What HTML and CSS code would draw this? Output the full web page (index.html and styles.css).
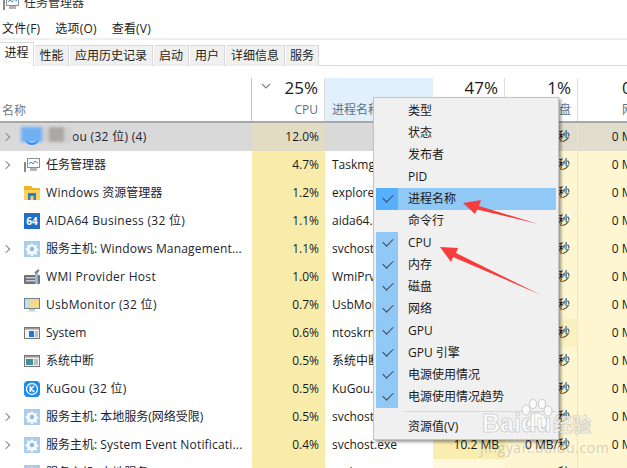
FILE: index.html
```html
<!DOCTYPE html>
<html lang="zh">
<head>
<meta charset="utf-8">
<title>任务管理器</title>
<link rel="stylesheet" href="styles.css">
</head>
<body>
<svg class="defs" width="0" height="0" aria-hidden="true">
  <symbol id="gear" viewBox="0 0 16 16">
    <rect width="16" height="16" fill="#a9cdec"/>
    <path d="M8 2.5l1 0 .4 1.5 1.2.5 1.4-.8 1.2 1.2-.8 1.4.5 1.2 1.5.4v1.800l-1.500.4-.5 1.200.8 1.400-1.200 1.200-1.400-.8-1.200.5-.4 1.500H7l-.4-1.500-1.200-.5-1.400.8-1.200-1.200.8-1.400-.5-1.200L1.600 9V7.200l1.500-.4.5-1.200-.8-1.400L4 3.400l1.400.8 1.200-.5L7 2.500z" fill="#f4f8fc"/>
    <circle cx="8" cy="8" r="2.200" fill="#8fb8de"/>
  </symbol>
</svg>
<div class="window">
  <div class="titlebar">
    <svg class="title-icon" width="16" height="16" viewBox="0 0 16 16"><rect x="3.500" y="1.500" width="12" height="9" fill="#fff" stroke="#8a9097"/><path d="M5 7l2-2 2 2 2-3 3 2" fill="none" stroke="#3a8fd0"/><rect x="0" y="5" width="2" height="10" fill="#8a8a8a"/><rect x="6" y="11" width="7" height="3" fill="#b5b5b5"/></svg>
    <span>任务管理器</span>
  </div>
  <nav class="menubar"><span>文件(F)</span><span>选项(O)</span><span>查看(V)</span></nav>
  <div class="tabs">
    <span class="tab active w34">进程</span>
    <span class="tab w34">性能</span>
    <span class="tab w84">应用历史记录</span>
    <span class="tab w36">启动</span>
    <span class="tab w36">用户</span>
    <span class="tab w60">详细信息</span>
    <span class="tab w33">服务</span>
  </div>

  <div class="grid head">
    <div class="hname">名称</div>
    <div class="hcol bordered"><svg class="sort" width="10" height="6" viewBox="0 0 10 6"><path d="M1 1l4 4 4-4" fill="none" stroke="#6d7f94" stroke-width="1.100"/></svg><b>25%</b><i>CPU</i></div>
    <div class="hcol left hot"><b>&nbsp;</b><i>进程名称</i></div>
    <div class="hcol bordered"><b>47%</b><i>内存</i></div>
    <div class="hcol bordered"><b>1%</b><i>磁盘</i></div>
    <div class="hcol left net"><b>0%</b><i>网络</i></div>
  </div>

  <div class="grid row selected">
    <div class="name"><span class="chev"></span><svg class="ico" width="16" height="16" viewBox="0 0 16 16"><circle cx="8" cy="8" r="8" fill="#2a8bf0"/><path d="M4 9a4 4 0 0 0 8 0" fill="none" stroke="#fff" stroke-width="1.400"/></svg><span class="label ls hidden-start">ou (32 位) (4)</span><span class="blur"></span></div>
    <div class="c cpu">12.0%</div><div class="p"></div><div class="c mem"></div><div class="c disk">0 MB/秒</div><div class="c netv">0 Mbps</div>
  </div>
  <div class="grid row">
    <div class="name"><span class="chev"></span><svg class="ico" width="16" height="16" viewBox="0 0 16 16"><rect x="3.500" y="1.500" width="12" height="9" fill="#fff" stroke="#8a9097"/><path d="M5 7l2-2 2 2 2-3 3 2" fill="none" stroke="#3a8fd0"/><rect x="0" y="5" width="2" height="10" fill="#8a8a8a"/><rect x="6" y="11" width="7" height="3" fill="#b5b5b5"/></svg><span class="label">任务管理器</span></div>
    <div class="c cpu">4.7%</div><div class="p">Taskmgr.exe</div><div class="c mem"></div><div class="c disk">0 MB/秒</div><div class="c netv">0 Mbps</div>
  </div>
  <div class="grid row">
    <div class="name"><svg class="ico" width="16" height="16" viewBox="0 0 16 16"><path d="M0 1h7l2 2h7v3H0z" fill="#f0b429"/><rect y="5" width="16" height="10" fill="#fbd25a"/><rect x="4" y="8" width="8" height="7" fill="#2b7fd0"/><rect x="6.500" y="11" width="3" height="4" fill="#fbd25a"/></svg><span class="label"><span class="ls">Windows</span> 资源管理器</span></div>
    <div class="c cpu">1.2%</div><div class="p">explorer.exe</div><div class="c mem"></div><div class="c disk">0 MB/秒</div><div class="c netv">0 Mbps</div>
  </div>
  <div class="grid row">
    <div class="name"><span class="ico sixty">64</span><span class="label ls">AIDA64 Business (32 位)</span></div>
    <div class="c cpu">1.1%</div><div class="p">aida64.exe</div><div class="c mem"></div><div class="c disk">0 MB/秒</div><div class="c netv">0 Mbps</div>
  </div>
  <div class="grid row">
    <div class="name"><span class="chev"></span><svg class="ico" width="16" height="16"><use href="#gear"/></svg><span class="label">服务主机: <span class="ls2">Windows Management...</span></span></div>
    <div class="c cpu">1.1%</div><div class="p">svchost.exe</div><div class="c mem"></div><div class="c disk">0 MB/秒</div><div class="c netv">0 Mbps</div>
  </div>
  <div class="grid row">
    <div class="name"><svg class="ico" width="16" height="16" viewBox="0 0 16 16"><rect x="0" y="6" width="16" height="9" rx="1" fill="#6f7276"/><rect x="2" y="8" width="9" height="1.500" fill="#c9ccd0"/><rect x="2" y="11" width="9" height="1.500" fill="#c9ccd0"/><rect x="11" y="3" width="3" height="12" fill="#9ab6d6"/><path d="M11 4l4-3" stroke="#777" stroke-width="2"/></svg><span class="label ls">WMI Provider Host</span></div>
    <div class="c cpu">1.0%</div><div class="p">WmiPrvSE.exe</div><div class="c mem"></div><div class="c disk">0 MB/秒</div><div class="c netv">0 Mbps</div>
  </div>
  <div class="grid row">
    <div class="name"><svg class="ico" width="16" height="16" viewBox="0 0 16 16"><rect x=".5" y="1.500" width="15" height="10" fill="#f6d98a" stroke="#6f8288"/><rect x="1" y="2" width="5" height="9" fill="#bfe0ef"/><rect x="5" y="12" width="6" height="2" fill="#c7d3da"/><rect x="3" y="14" width="10" height="1" fill="#dfe6ea"/></svg><span class="label ls">UsbMonitor (32 位)</span></div>
    <div class="c cpu">0.7%</div><div class="p">UsbMonitor.exe</div><div class="c mem"></div><div class="c disk">0 MB/秒</div><div class="c netv">0 Mbps</div>
  </div>
  <div class="grid row">
    <div class="name"><svg class="ico" width="16" height="16" viewBox="0 0 16 16"><rect x=".5" y="2.500" width="15" height="11" fill="#f2f2f2" stroke="#777"/><rect x="1" y="3" width="14" height="1.500" fill="#9a9a9a"/><rect x="5" y="6" width="5" height="6" fill="#1f78d6"/><path d="M11 7h3M11 9h3M11 11h3" stroke="#888"/></svg><span class="label">System</span></div>
    <div class="c cpu">0.6%</div><div class="p">ntoskrnl.exe</div><div class="c mem"></div><div class="c disk darker">0 MB/秒</div><div class="c netv">0 Mbps</div>
  </div>
  <div class="grid row">
    <div class="name"><svg class="ico" width="16" height="16" viewBox="0 0 16 16"><rect x=".5" y="2.500" width="15" height="11" fill="#f2f2f2" stroke="#777"/><rect x="1" y="3" width="14" height="1.500" fill="#9a9a9a"/><rect x="2" y="6" width="7" height="6" fill="#3f8f9f"/><path d="M10 7h4M10 9h4M10 11h4" stroke="#888"/></svg><span class="label">系统中断</span></div>
    <div class="c cpu">0.5%</div><div class="p">系统中断</div><div class="c mem"></div><div class="c disk">0 MB/秒</div><div class="c netv">0 Mbps</div>
  </div>
  <div class="grid row">
    <div class="name"><svg class="ico" width="16" height="16" viewBox="0 0 16 16"><rect width="16" height="16" rx="4" fill="#1c8cf5"/><circle cx="8" cy="8" r="5.500" fill="none" stroke="#fff" stroke-width="1.300"/><path d="M6.300 5v6M10.300 5L6.800 8l3.500 3" fill="none" stroke="#fff" stroke-width="1.500"/></svg><span class="label ls">KuGou (32 位)</span></div>
    <div class="c cpu">0.5%</div><div class="p">KuGou.exe</div><div class="c mem"></div><div class="c disk">0 MB/秒</div><div class="c netv">0 Mbps</div>
  </div>
  <div class="grid row">
    <div class="name"><span class="chev"></span><svg class="ico" width="16" height="16"><use href="#gear"/></svg><span class="label">服务主机: 本地服务(网络受限)</span></div>
    <div class="c cpu">0.5%</div><div class="p">svchost.exe</div><div class="c mem"></div><div class="c disk">0 MB/秒</div><div class="c netv">0 Mbps</div>
  </div>
  <div class="grid row">
    <div class="name"><span class="chev"></span><svg class="ico" width="16" height="16"><use href="#gear"/></svg><span class="label">服务主机: <span class="ls2">System Event Notificati...</span></span></div>
    <div class="c cpu">0.4%</div><div class="p">svchost.exe</div><div class="c mem">10.2 MB</div><div class="c disk">0 MB/秒</div><div class="c netv">0 Mbps</div>
  </div>
  <div class="grid row">
    <div class="name"><span class="chev"></span><svg class="ico" width="16" height="16"><use href="#gear"/></svg><span class="label">服务主机: 本地服务</span></div>
    <div class="c cpu">0.4%</div><div class="p">svchost.exe</div><div class="c mem plain"></div><div class="c disk">0 MB/秒</div><div class="c netv">0 Mbps</div>
  </div>

  <div class="ctx">
    <div class="it">类型</div>
    <div class="it">状态</div>
    <div class="it">发布者</div>
    <div class="it">PID</div>
    <div class="it on hl">进程名称</div>
    <div class="it">命令行</div>
    <div class="it on">CPU</div>
    <div class="it on">内存</div>
    <div class="it on">磁盘</div>
    <div class="it on">网络</div>
    <div class="it on">GPU</div>
    <div class="it on">GPU 引擎</div>
    <div class="it on">电源使用情况</div>
    <div class="it on">电源使用情况趋势</div>
    <div class="sep"></div>
    <div class="it">资源值(V)</div>
  </div>

  <svg class="arrows" width="627" height="468" viewBox="0 0 627 468" aria-hidden="true">
    <path d="M463 203L481 200 479 206 538 224 477 209.500 475 214z" fill="#f63c3c"/>
    <path d="M440 247L458 248 456 253 541 295 453 257 451 262z" fill="#f63c3c"/>
  </svg>

  <div class="mark">
    <svg class="paw" width="36" height="30" viewBox="0 0 36 30"><g fill="#fff" fill-opacity=".7" stroke="#8f8f8f" stroke-opacity=".4"><ellipse cx="8" cy="11" rx="4" ry="5"/><ellipse cx="15" cy="5" rx="3.500" ry="4.500"/><ellipse cx="24" cy="5" rx="3.500" ry="4.500"/><ellipse cx="30" cy="12" rx="4" ry="5"/><path d="M9 24c0-6 6-10 10-10s10 4 10 10-6 5-10 4-10 2-10-4z"/></g></svg>
    <span class="bd">Baidu</span><span class="jy">经验</span>
    <span class="url">jingyan.baidu.com</span>
  </div>
</div>
</body>
</html>
```
FILE: styles.css
```css
* { box-sizing: border-box; }
html, body { margin: 0; padding: 0; }
body {
  width: 627px;
  height: 468px;
  overflow: hidden;
  background: #fff;
  color: #1a1a1a;
  font: 12px/16px "Open Sans", "Noto Sans CJK SC", sans-serif;
}
.defs { position: absolute; }
.window { position: relative; width: 627px; height: 468px; overflow: hidden; background: #fff; }

.titlebar { display: flex; align-items: center; gap: 5px; height: 22px; margin-top: -8px; margin-bottom: 6px; padding-left: 3px; color: #333; }
.title-icon { flex: none; }

.menubar { display: flex; gap: 15px; height: 18px; padding-left: 2px; align-items: center; color: #222; letter-spacing: .2px; }
.tabs { display: flex; gap: 1px; height: 28px; padding-top: 5px; border-top: 2px solid #f0f0f0; border-bottom: 1px solid #d9d9d9; }
.tab { display: flex; align-items: center; justify-content: center; height: 21px; background: #f0f0f0; border: 1px solid #d9d9d9; border-bottom: 0; border-left: 0; color: #222; }
.tab.active { height: 24px; margin-top: -3px; background: #fff; margin-bottom: -1px; border-left: 0; padding-bottom: 3px; }
.w34 { width: 34px; } .w84 { width: 83px; } .w36 { width: 35px; } .w60 { width: 59px; } .w33 { width: 33px; }

.grid { display: grid; grid-template-columns: 252px 73px 108px 72px 73px 90px; }
.head { height: 57px; border-bottom: 2px solid #a8a8a8; align-items: stretch; }
.hcol { position: relative; display: flex; flex-direction: column; align-items: flex-end; justify-content: flex-end; margin-top: 12px; padding: 0 6px 3px 0; }
.hcol b { font-weight: 400; font-size: 17px; line-height: 20px; color: #1a1a1a; height: 24px; }
.hcol i { font-style: normal; font-size: 12px; line-height: 16px; color: #5f6f86; }
.hname { display: flex; align-items: flex-end; margin-top: 12px; padding: 0 0 2px 2px; color: #6d7a8a; border-right: 1px solid #c6c6c6; }
.hcol.bordered { border-right: 1px solid #dcdcdc; }
.hcol.left { align-items: flex-start; padding-left: 7px; }
.hcol.hot { background: #e2f0fc; }
.hcol.net { padding-left: 44px; }
.sort { position: absolute; left: 9px; top: 5px; }

.row { height: 28px; }
.row > div { display: flex; align-items: center; min-width: 0; }
.name { position: relative; padding-left: 24px; }
.chev { position: absolute; left: 3px; top: 11px; width: 6px; height: 6px; border-top: 1.5px solid #8a8a8a; border-right: 1.5px solid #8a8a8a; transform: rotate(45deg); }
.ico { flex: none; margin-right: 6px; }
.label { white-space: nowrap; color: #1c2430; }
.ls { letter-spacing: .3px; }
.ls2 { letter-spacing: .18px; }
.sixty { display: block; width: 16px; height: 16px; background: #1f6fc4; color: #fff; font: 700 10px/16px "Open Sans", sans-serif; text-align: center; }
.c { justify-content: flex-end; padding-right: 6px; white-space: nowrap; color: #1a1a1a; }
.p { padding-left: 7px; white-space: nowrap; overflow: hidden; }
.cpu { background: #f9ecaa; }
.mem { background: #f9edb0; }
.mem.plain { background: #fff8dc; }
.disk { background: #fef6d0; border-right: 1px solid #efe4c0; padding-right: 7px; }
.disk.darker { background: #fbf0c0; }
.netv { background: #fef6d0; padding-right: 15px; }

.selected .name { background: #d9d9d9; }
.selected .cpu { background: #e2dcc4; }
.selected .p { background: #d9d9d9; }
.selected .mem, .selected .disk, .selected .netv { background: #e0ddcd; }
.blur { position: absolute; left: 21px; top: 4px; width: 51px; height: 15px; background: linear-gradient(90deg, #6fb0f5 0 42%, #d0d0d0 42% 55%, #aca6a6 55% 85%, #d0d0d0 85%); filter: blur(1.5px); }
.hidden-start { margin-left: 26px; }

.ctx { position: absolute; left: 373px; top: 97px; width: 186px; height: 343px; padding: 2px; background: #f0f0f0; border: 1px solid #c4c4c4; box-shadow: 2px 2px 3px rgba(0,0,0,.4); }
.it { position: relative; height: 22px; line-height: 21px; padding-left: 32px; color: #1a1a1a; }
.it.hl { background: #90c8f6; }
.it.on::before { content: ""; position: absolute; left: 0; top: 0; width: 22px; height: 22px; background: #90c8f6; }
.it.hl::before { background: #56b0fe; }
.it.on::after { content: ""; position: absolute; left: 7px; top: 6px; width: 9px; height: 5px; border-left: 1.6px solid #3c4a56; border-bottom: 1.6px solid #3c4a56; transform: rotate(-45deg); }
.sep { height: 1px; margin: 3px 0 4px 28px; background: #d7d7d7; }

.arrows { position: absolute; left: 0; top: 0; pointer-events: none; }

.mark { position: absolute; left: 480px; top: 398px; width: 147px; height: 66px; pointer-events: none; }
.paw { position: absolute; left: 38px; top: 1px; }
.bd { position: absolute; left: 2px; top: 11px; font: 700 25px/28px "Liberation Sans", sans-serif; color: rgba(255,255,255,.75); -webkit-text-stroke: 1px rgba(120,120,120,.3); }
.jy { position: absolute; left: 73px; top: 13px; font: 700 19px/26px "Noto Sans CJK SC", sans-serif; color: rgba(255,255,255,.75); -webkit-text-stroke: 1px rgba(120,120,120,.3); }
.url { position: absolute; left: 0; top: 42px; font-size: 14px; letter-spacing: .6px; color: rgba(170,170,170,.5); }
```
